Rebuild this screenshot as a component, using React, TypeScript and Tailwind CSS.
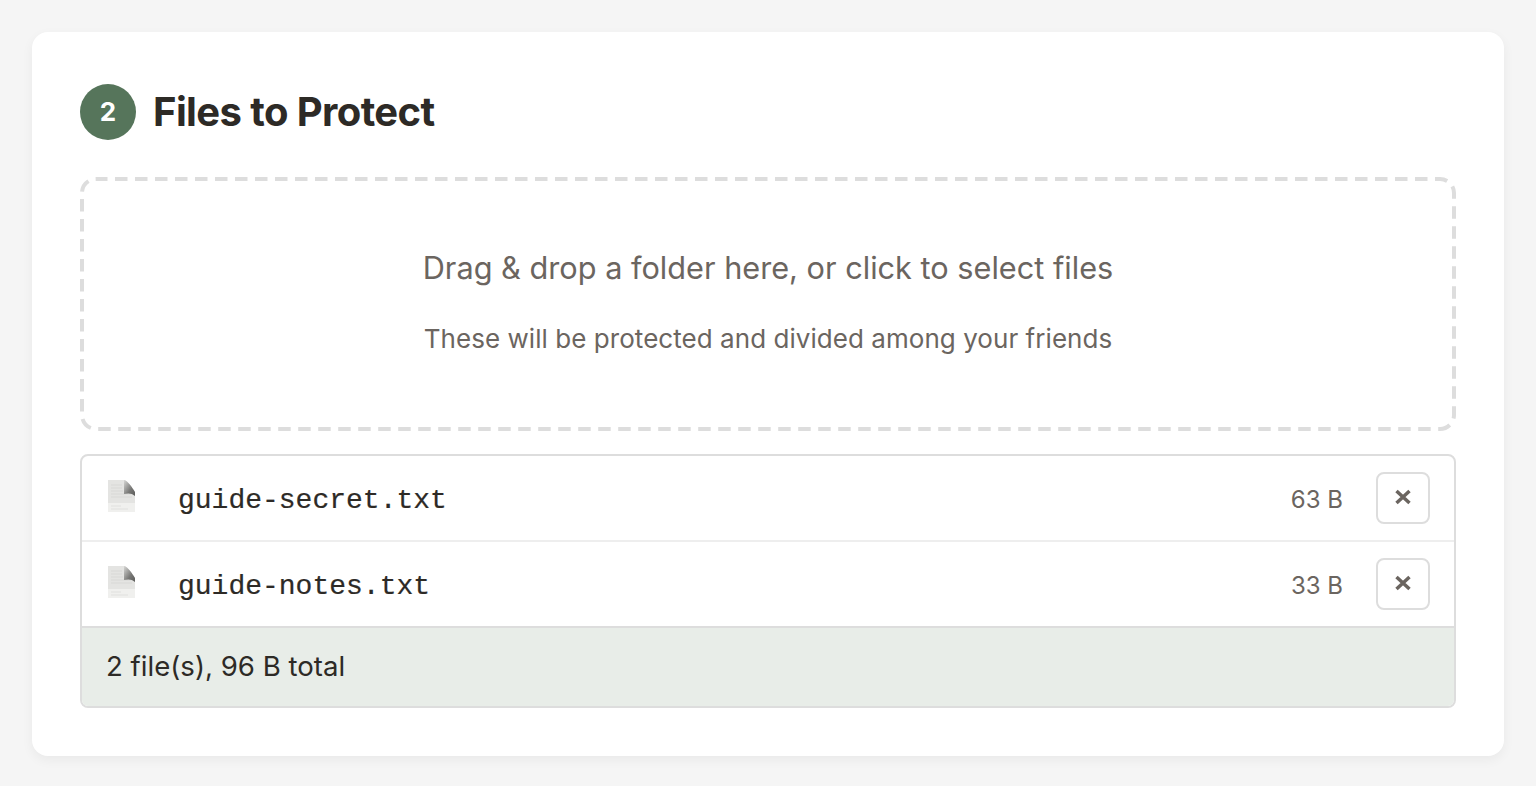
const files = [
  { name: "guide-secret.txt", size: "63 B" },
  { name: "guide-notes.txt", size: "33 B" },
]

function FileIcon() {
  return (
    <svg width="28" height="32" viewBox="0 0 28 32" className="mb-1 ml-[2px] shrink-0">
      <defs>
        <linearGradient id="fold" x1="0" y1="0" x2="1" y2="1">
          <stop offset="0" stopColor="#d8d8d6" />
          <stop offset="0.6" stopColor="#777775" />
          <stop offset="1" stopColor="#5c5c5a" />
        </linearGradient>
      </defs>
      <path d="M0 0H17L27 12V32H0Z" fill="#e4e4e2" />
      <path d="M0 23H27V32H0Z" fill="#f0f0ee" />
      <path d="M3 5H14M3 8H14M3 11H15M3 14H24M3 17H24" stroke="#d8d8d6" strokeWidth="1" />
      <path d="M3 26H13M3 29H20" stroke="#e0e0de" strokeWidth="1" />
      <path d="M16 0C20 1 24 7 27 12V16C24 13 20 13 16 14Z" fill="url(#fold)" />
    </svg>
  )
}

export default function App() {
  return (
    <div className="min-h-[786px] bg-[#f5f5f5] p-8 font-['Inter',sans-serif] text-[#2d2a26]">
      <div className="h-[724px] rounded-2xl bg-white px-12 pt-[52px] shadow-[0_4px_12px_rgba(0,0,0,0.05)]">
        <div className="flex items-center gap-[17px]">
          <div className="flex h-14 w-14 items-center justify-center rounded-full bg-[#56755b] pb-px text-[26px] font-bold text-white">
            2
          </div>
          <h2 className="text-[40px] leading-[54px] font-bold tracking-[-0.6px]">Files to Protect</h2>
        </div>

        <div className="relative mt-[37px] flex h-[254px] flex-col items-center pt-[69px] text-[#6b6560]">
          {/* css dashed borders come out too short here */}
          <svg viewBox="0 0 1376 254" className="absolute inset-0 h-full w-full" fill="none">
            <rect x="2" y="2" width="1372" height="250" rx="14" stroke="#dddddd" strokeWidth="4" strokeDasharray="12.5 7.5" strokeDashoffset="1" />
          </svg>
          <p className="text-[30.7px] leading-[44px]">Drag &amp; drop a folder here, or click to select files</p>
          <p className="mt-[30px] text-[26px] leading-[38px] tracking-[0.05px]">These will be protected and divided among your friends</p>
        </div>

        <div className="mt-[23px] overflow-hidden rounded-lg border-2 border-[#dddddd]">
          {files.map((file, i) => (
            <div key={file.name} className={`flex h-[86px] items-center border-b-2 pr-6 pl-6 ${i === 0 ? "border-[#eeeeee]" : "border-[#dddddd]"}`}>
              <FileIcon />
              <span className="ml-[42px] flex-1 pt-1.5 font-['Liberation_Mono',monospace] text-[28px] [-webkit-text-stroke:0.2px]">{file.name}</span>
              <span className="mr-[33px] pt-1 text-[24px] text-[#6b6560]">{file.size}</span>
              <button className="flex h-[52px] w-[54px] items-center justify-center rounded-lg border-2 border-[#dddddd] pb-[3px] text-[#6b6560]">
                <svg width="18" height="18" viewBox="0 0 18 18">
                  <path d="M2.5 3L15.5 15M15.5 3L2.5 15" stroke="currentColor" strokeWidth="3.5" />
                </svg>
              </button>
            </div>
          ))}
          <div className="flex h-[78px] items-center bg-[#e8ede8] px-6 text-[27.6px]">
            2 file(s), 96 B total
          </div>
        </div>
      </div>
    </div>
  )
}
